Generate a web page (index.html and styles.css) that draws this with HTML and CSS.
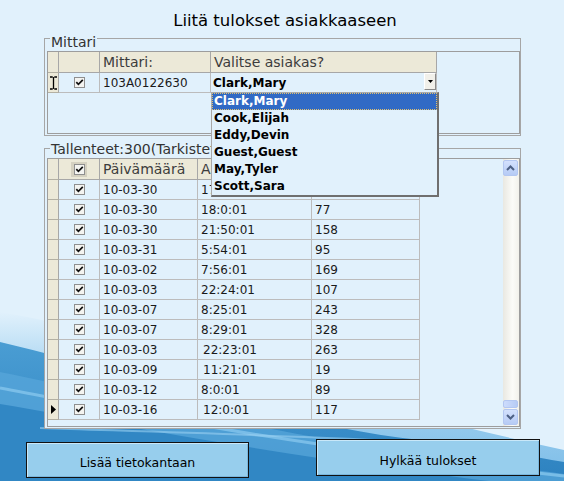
FILE: index.html
```html
<!DOCTYPE html>
<html lang="fi">
<head>
<meta charset="utf-8">
<title>Liitä tulokset asiakkaaseen</title>
<link rel="stylesheet" href="styles.css">
</head>
<body>
<div class="screen">
  <svg class="wave" width="564" height="481" viewBox="0 0 564 481" aria-hidden="true">
    <defs>
      <linearGradient id="haze" x1="0" y1="0" x2="0" y2="1">
        <stop offset="0" stop-color="#e1f1fc"/>
        <stop offset="0.35" stop-color="#a9d5f1"/>
        <stop offset="1" stop-color="#7dbde8"/>
      </linearGradient>
      <linearGradient id="deep" x1="0" y1="0" x2="0" y2="1">
        <stop offset="0" stop-color="#4a9dd3"/>
        <stop offset="1" stop-color="#2d82c0"/>
      </linearGradient>
    </defs>
    <path d="M0,312 C140,336 300,392 564,450 L564,481 L0,481 Z" fill="url(#haze)"/>
    <path d="M0,342 C150,378 300,428 420,440 C480,447 530,456 564,462 L564,481 L0,481 Z" fill="url(#deep)"/>
    <path d="M0,372 C130,398 270,438 564,474 L564,481 L0,481 Z" fill="#57a6da" opacity="0.75"/>
    <path d="M0,404 C130,426 270,456 564,490 L564,481 L0,481 Z" fill="#3187c4"/>
    <path d="M0,388 C120,410 250,440 564,476" stroke="#8ccaf0" stroke-width="3" fill="none" opacity="0.7"/>
    <path d="M40,428 C160,432 300,436 420,442" stroke="#9ad0f1" stroke-width="2" fill="none" opacity="0.6"/>
  </svg>

  <div class="content">
    <h1 class="title">Liitä tulokset asiakkaaseen</h1>

    <section class="group group-meter">
      <div class="group-label">Mittari</div>
      <div class="grid grid-meter">
        <div class="row row-head">
          <div class="cell rh"></div>
          <div class="cell cb"></div>
          <div class="cell">Mittari:</div>
          <div class="cell">Valitse asiakas?</div>
        </div>
        <div class="row">
          <div class="cell rh">
            <svg class="ibeam" width="7" height="14" viewBox="0 0 7 14"><path d="M0 1H2.5M4.5 1H7M3.5 1.5V12.5M0 13H2.5M4.5 13H7" stroke="#000" stroke-width="1.3" fill="none"/><path d="M2.5 1Q3.5 1.2 3.5 2M4.5 1Q3.5 1.2 3.5 2M2.5 13Q3.5 12.8 3.5 12M4.5 13Q3.5 12.8 3.5 12" stroke="#000" stroke-width="1" fill="none"/></svg>
          </div>
          <div class="cell cb"><svg class="chk" width="11" height="11" viewBox="0 0 11 11"><rect x="0.5" y="0.5" width="10" height="10" fill="#f4f4f1" stroke="#8f8f8f"/><path d="M2.3 5.2L4.4 7.4L8.8 2.9" stroke="#111" stroke-width="1.7" fill="none"/></svg></div>
          <div class="cell">103A0122630</div>
          <div class="cell combo">
            <span class="combo-text">Clark,Mary</span>
            <span class="combo-btn"><svg width="5" height="3" viewBox="0 0 5 3"><path d="M0 0H5L2.5 3Z" fill="#000"/></svg></span>
          </div>
        </div>
      </div>
    </section>

    <section class="group group-records">
      <div class="group-label">Tallenteet:300(Tarkistettu:300)</div>
      <div class="grid grid-records">
        <div class="rows">
          <div class="row row-head">
            <div class="cell rh"></div>
            <div class="cell cb"><span class="cb-hd"><svg class="chk" width="11" height="11" viewBox="0 0 11 11"><rect x="0.5" y="0.5" width="10" height="10" fill="#f4f4f1" stroke="#8f8f8f"/><path d="M2.3 5.2L4.4 7.4L8.8 2.9" stroke="#111" stroke-width="1.7" fill="none"/></svg></span></div>
            <div class="cell">Päivämäärä</div>
            <div class="cell">Aika</div>
            <div class="cell">Arvo</div>
          </div>
          <div class="row"><div class="cell rh"></div><div class="cell cb"><svg class="chk" width="11" height="11" viewBox="0 0 11 11"><rect x="0.5" y="0.5" width="10" height="10" fill="#f4f4f1" stroke="#8f8f8f"/><path d="M2.3 5.2L4.4 7.4L8.8 2.9" stroke="#111" stroke-width="1.7" fill="none"/></svg></div><div class="cell">10-03-30</div><div class="cell">17:30:01</div><div class="cell">212</div></div>
          <div class="row"><div class="cell rh"></div><div class="cell cb"><svg class="chk" width="11" height="11" viewBox="0 0 11 11"><rect x="0.5" y="0.5" width="10" height="10" fill="#f4f4f1" stroke="#8f8f8f"/><path d="M2.3 5.2L4.4 7.4L8.8 2.9" stroke="#111" stroke-width="1.7" fill="none"/></svg></div><div class="cell">10-03-30</div><div class="cell">18:0:01</div><div class="cell">77</div></div>
          <div class="row"><div class="cell rh"></div><div class="cell cb"><svg class="chk" width="11" height="11" viewBox="0 0 11 11"><rect x="0.5" y="0.5" width="10" height="10" fill="#f4f4f1" stroke="#8f8f8f"/><path d="M2.3 5.2L4.4 7.4L8.8 2.9" stroke="#111" stroke-width="1.7" fill="none"/></svg></div><div class="cell">10-03-30</div><div class="cell">21:50:01</div><div class="cell">158</div></div>
          <div class="row"><div class="cell rh"></div><div class="cell cb"><svg class="chk" width="11" height="11" viewBox="0 0 11 11"><rect x="0.5" y="0.5" width="10" height="10" fill="#f4f4f1" stroke="#8f8f8f"/><path d="M2.3 5.2L4.4 7.4L8.8 2.9" stroke="#111" stroke-width="1.7" fill="none"/></svg></div><div class="cell">10-03-31</div><div class="cell">5:54:01</div><div class="cell">95</div></div>
          <div class="row"><div class="cell rh"></div><div class="cell cb"><svg class="chk" width="11" height="11" viewBox="0 0 11 11"><rect x="0.5" y="0.5" width="10" height="10" fill="#f4f4f1" stroke="#8f8f8f"/><path d="M2.3 5.2L4.4 7.4L8.8 2.9" stroke="#111" stroke-width="1.7" fill="none"/></svg></div><div class="cell">10-03-02</div><div class="cell">7:56:01</div><div class="cell">169</div></div>
          <div class="row"><div class="cell rh"></div><div class="cell cb"><svg class="chk" width="11" height="11" viewBox="0 0 11 11"><rect x="0.5" y="0.5" width="10" height="10" fill="#f4f4f1" stroke="#8f8f8f"/><path d="M2.3 5.2L4.4 7.4L8.8 2.9" stroke="#111" stroke-width="1.7" fill="none"/></svg></div><div class="cell">10-03-03</div><div class="cell">22:24:01</div><div class="cell">107</div></div>
          <div class="row"><div class="cell rh"></div><div class="cell cb"><svg class="chk" width="11" height="11" viewBox="0 0 11 11"><rect x="0.5" y="0.5" width="10" height="10" fill="#f4f4f1" stroke="#8f8f8f"/><path d="M2.3 5.2L4.4 7.4L8.8 2.9" stroke="#111" stroke-width="1.7" fill="none"/></svg></div><div class="cell">10-03-07</div><div class="cell">8:25:01</div><div class="cell">243</div></div>
          <div class="row"><div class="cell rh"></div><div class="cell cb"><svg class="chk" width="11" height="11" viewBox="0 0 11 11"><rect x="0.5" y="0.5" width="10" height="10" fill="#f4f4f1" stroke="#8f8f8f"/><path d="M2.3 5.2L4.4 7.4L8.8 2.9" stroke="#111" stroke-width="1.7" fill="none"/></svg></div><div class="cell">10-03-07</div><div class="cell">8:29:01</div><div class="cell">328</div></div>
          <div class="row"><div class="cell rh"></div><div class="cell cb"><svg class="chk" width="11" height="11" viewBox="0 0 11 11"><rect x="0.5" y="0.5" width="10" height="10" fill="#f4f4f1" stroke="#8f8f8f"/><path d="M2.3 5.2L4.4 7.4L8.8 2.9" stroke="#111" stroke-width="1.7" fill="none"/></svg></div><div class="cell">10-03-03</div><div class="cell sh">22:23:01</div><div class="cell">263</div></div>
          <div class="row"><div class="cell rh"></div><div class="cell cb"><svg class="chk" width="11" height="11" viewBox="0 0 11 11"><rect x="0.5" y="0.5" width="10" height="10" fill="#f4f4f1" stroke="#8f8f8f"/><path d="M2.3 5.2L4.4 7.4L8.8 2.9" stroke="#111" stroke-width="1.7" fill="none"/></svg></div><div class="cell">10-03-09</div><div class="cell sh">11:21:01</div><div class="cell">19</div></div>
          <div class="row"><div class="cell rh"></div><div class="cell cb"><svg class="chk" width="11" height="11" viewBox="0 0 11 11"><rect x="0.5" y="0.5" width="10" height="10" fill="#f4f4f1" stroke="#8f8f8f"/><path d="M2.3 5.2L4.4 7.4L8.8 2.9" stroke="#111" stroke-width="1.7" fill="none"/></svg></div><div class="cell">10-03-12</div><div class="cell">8:0:01</div><div class="cell">89</div></div>
          <div class="row"><div class="cell rh"><svg width="5" height="9" viewBox="0 0 5 9"><path d="M0 0L5 4.5L0 9Z" fill="#000"/></svg></div><div class="cell cb"><svg class="chk" width="11" height="11" viewBox="0 0 11 11"><rect x="0.5" y="0.5" width="10" height="10" fill="#f4f4f1" stroke="#8f8f8f"/><path d="M2.3 5.2L4.4 7.4L8.8 2.9" stroke="#111" stroke-width="1.7" fill="none"/></svg></div><div class="cell">10-03-16</div><div class="cell sh">12:0:01</div><div class="cell">117</div></div>
        </div>
        <div class="spacer"></div>
        <div class="scrollbar">
          <div class="sb-btn"><svg width="9" height="6" viewBox="0 0 9 6"><path d="M1 5L4.5 1.5L8 5" stroke="#4d6185" stroke-width="2" fill="none"/></svg></div>
          <div class="sb-track"></div>
          <div class="sb-thumb"></div>
          <div class="sb-btn"><svg width="9" height="6" viewBox="0 0 9 6"><path d="M1 1L4.5 4.5L8 1" stroke="#4d6185" stroke-width="2" fill="none"/></svg></div>
        </div>
      </div>
    </section>

    <div class="buttons">
      <button class="btn btn-add" type="button">Lisää tietokantaan</button>
      <button class="btn btn-reject" type="button">Hylkää tulokset</button>
    </div>
  </div>

  <ul class="dropdown">
    <li class="sel">Clark,Mary</li>
    <li>Cook,Elijah</li>
    <li>Eddy,Devin</li>
    <li>Guest,Guest</li>
    <li>May,Tyler</li>
    <li>Scott,Sara</li>
  </ul>
</div>
</body>
</html>
```

FILE: styles.css
```css
* { box-sizing: border-box; }

html, body {
  margin: 0;
  padding: 0;
}

body {
  width: 564px;
  height: 481px;
  overflow: hidden;
  background: #e1f1fc;
  font-family: "DejaVu Sans", Verdana, sans-serif;
  color: #111;
}

.screen {
  position: relative;
  width: 564px;
  height: 481px;
  overflow: hidden;
}

.wave {
  position: absolute;
  left: 0;
  top: 0;
  z-index: 0;
  display: block;
}

.content {
  position: relative;
  z-index: 1;
}

.title {
  margin: 0;
  height: 38px;
  padding: 11px 0 0 6px;
  font-size: 16.5px;
  line-height: 20px;
  font-weight: normal;
  text-align: center;
  color: #000;
}

.group {
  margin-left: 44px;
  width: 477px;
  border: 1px solid #a6a6a6;
  background: #e1f1fc;
  padding: 0 0 1px 2px;
}

.group-records { margin-top: 12px; }

.group-label {
  width: max-content;
  margin-left: 3px;
  padding: 0 1px;
  background: #e1f1fc;
  font-size: 14px;
  line-height: 16px;
  color: #333;
  white-space: nowrap;
}

.group-meter .group-label { margin-top: -5px; }
.group-records .group-label { margin-top: -8px; }

.grid {
  margin-top: 1px;
  width: 473px;
  border: 1px solid #9d9d9d;
  background: #e1f1fc;
}

.grid-meter { height: 83px; }

.grid-records {
  height: 269px;
  display: flex;
}

.row { display: grid; }

.grid-meter .row {
  width: 389px;
  grid-template-columns: 11px 41px 111px 226px;
}

.rows { width: 372px; }

.grid-records .row {
  grid-template-columns: 11px 41px 98px 114px 108px;
}

.cell {
  height: 20px;
  line-height: 21px;
  padding-left: 3px;
  border-right: 1px solid #bcbcbc;
  border-bottom: 1px solid #bcbcbc;
  font-size: 12px;
  color: #1a1a1a;
  white-space: nowrap;
  overflow: hidden;
}

.row-head .cell {
  height: 21px;
  background: #ece9d8;
  border-color: #a7a7a7;
  font-size: 14px;
  color: #3c3c3c;
}

.cell.rh {
  padding: 0;
  background: #ece9d8;
  border-right-color: #a7a7a7;
  border-bottom-color: #b3b0a3;
  display: flex;
  align-items: center;
  justify-content: center;
}

.cell.cb {
  padding: 0;
  display: flex;
  align-items: center;
  justify-content: center;
}

.cb-hd {
  width: 16px;
  height: 15px;
  background: #d5d1c1;
  display: flex;
  align-items: center;
  justify-content: center;
}

.chk { display: block; }

.cell.sh { padding-left: 5px; }

.combo {
  display: flex;
  justify-content: space-between;
  padding-left: 2px;
}

.combo-text {
  font-weight: bold;
  color: #000;
}

.combo-btn {
  width: 12px;
  height: 17px;
  margin-top: 0;
  background: #f1f0ea;
  border: 1px solid;
  border-color: #ffffff #8a8a8a #8a8a8a #ffffff;
  display: flex;
  align-items: center;
  justify-content: center;
}

.spacer { flex: 1; }

.scrollbar {
  width: 16px;
  display: flex;
  flex-direction: column;
  padding: 1px 1px 1px 0;
  background: linear-gradient(to right, #e9e8e1, #fbfbf8 60%, #f2f1eb);
}

.sb-btn {
  height: 16px;
  border: 1px solid #b3c7f1;
  border-radius: 2px;
  background: linear-gradient(#d3e1fd, #b6cbf5);
  display: flex;
  align-items: center;
  justify-content: center;
}

.sb-track { flex: 1; }

.sb-thumb {
  height: 8px;
  margin-bottom: 1px;
  border: 1px solid #b3c7f1;
  border-radius: 2px;
  background: linear-gradient(to right, #cddcfc, #b6cbf5);
}

.buttons {
  display: flex;
  align-items: flex-start;
  margin-top: 10px;
}

.btn {
  font-family: inherit;
  font-size: 12.5px;
  color: #000;
  background: #97ceed;
  border: 1px solid #111;
  box-shadow: inset 1px 1px 0 #c9e8f9, inset -1px -1px 0 #79b6dc;
  padding: 5px 0 0 0;
  margin: 0;
}

.btn-add {
  margin: 3px 0 0 26px;
  width: 223px;
  height: 36px;
}

.btn-reject {
  margin-left: 67px;
  width: 224px;
  height: 37px;
}

.dropdown {
  position: absolute;
  left: 211px;
  top: 92px;
  width: 228px;
  margin: 0;
  padding: 0;
  list-style: none;
  background: #e1f1fc;
  border: 1px solid #a9a9a9;
  border-right: 2px solid #6f6f6f;
  border-bottom: 2px solid #6f6f6f;
  z-index: 5;
}

.dropdown li {
  height: 17px;
  line-height: 17px;
  padding-left: 2px;
  font-size: 12px;
  font-weight: bold;
  color: #000;
  white-space: nowrap;
}

.dropdown li.sel {
  background: #316ac5;
  color: #fff;
  outline: 1px dotted #e0c070;
  outline-offset: -1px;
}
```
